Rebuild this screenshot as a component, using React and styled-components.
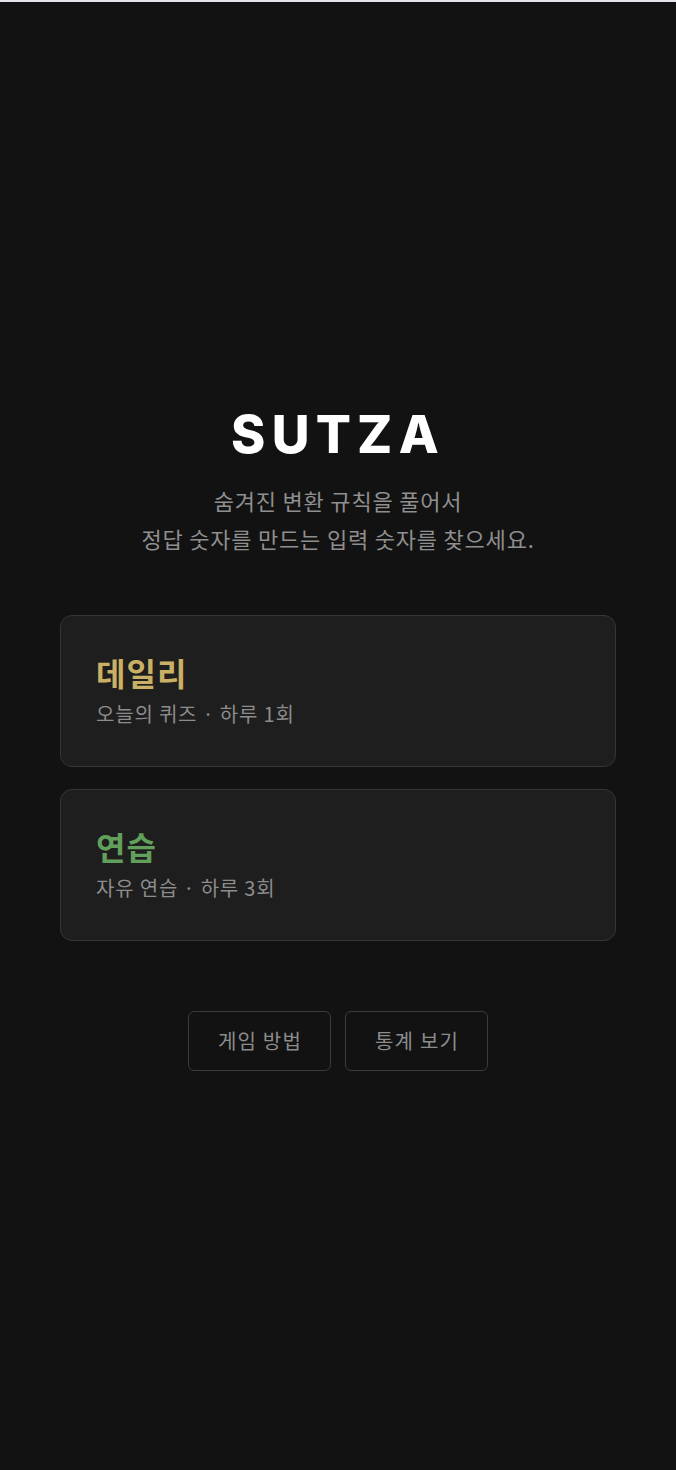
import React from 'react';
import styled, { createGlobalStyle } from 'styled-components';

const GlobalStyle = createGlobalStyle`
  html, body {
    margin: 0;
    padding: 0;
    background: #121212;
  }
  body {
    font-family: "Noto Sans CJK KR", "Noto Sans", sans-serif;
    -webkit-font-smoothing: antialiased;
  }
  * {
    box-sizing: border-box;
  }
`;

const TopStrip = styled.div`
  height: 2px;
  background: #e6e3ea;
`;

const Page = styled.main`
  min-height: calc(100vh - 2px);
  display: flex;
  flex-direction: column;
  align-items: center;
  justify-content: center;
  padding: 0 60px;
  color: #fff;
`;

const Title = styled.h1`
  margin: 2px 0 0;
  font-family: Inter, "Liberation Sans", sans-serif;
  font-size: 52px;
  font-weight: 800;
  line-height: 62px;
  letter-spacing: 0.12em;
  color: #fff;
`;

const Lead = styled.p`
  margin: 15px 0 0;
  font-size: 22px;
  line-height: 38px;
  color: #8f8f8f;
  text-align: center;
  letter-spacing: 0.8px;
`;

const ModeList = styled.div`
  width: 100%;
  max-width: 556px;
  margin-top: 58px;
  display: flex;
  flex-direction: column;
  gap: 22px;
`;

const ModeCard = styled.button`
  display: block;
  width: 100%;
  text-align: left;
  padding: 36px 35px 38px;
  background: #1e1e1e;
  border: 1.5px solid #363636;
  border-radius: 12px;
  cursor: pointer;
  font-family: inherit;
`;

const ModeName = styled.div`
  font-size: 32px;
  line-height: 40px;
  font-weight: 700;
  letter-spacing: 1px;
  color: ${(props) => props.color};
`;

const ModeInfo = styled.div`
  margin-top: 8px;
  font-size: 20px;
  line-height: 28px;
  letter-spacing: 0.8px;
  color: #8c8c8c;
`;

const ButtonRow = styled.div`
  margin-top: 70px;
  display: flex;
  gap: 14px;
  justify-content: center;
`;

const GhostButton = styled.button`
  height: 60px;
  padding: 0 28px 0 29px;
  background: transparent;
  border: 1.5px solid #3a3a3a;
  border-radius: 6px;
  color: #8c8c8c;
  font-family: inherit;
  font-size: 20px;
  letter-spacing: 1.2px;
  cursor: pointer;
`;

const modes = [
  { name: '데일리', info: '오늘의 퀴즈 · 하루 1회', color: '#c9b064' },
  { name: '연습', info: '자유 연습 · 하루 3회', color: '#619f5b' },
];

export default function App() {
  return (
    <>
      <GlobalStyle />
      <TopStrip />
      <Page>
        <Title>SUTZA</Title>
        <Lead>
          숨겨진 변환 규칙을 풀어서
          <br />
          정답 숫자를 만드는 입력 숫자를 찾으세요.
        </Lead>
        <ModeList>
          {modes.map((m) => (
            <ModeCard key={m.name}>
              <ModeName color={m.color}>{m.name}</ModeName>
              <ModeInfo>{m.info}</ModeInfo>
            </ModeCard>
          ))}
        </ModeList>
        <ButtonRow>
          <GhostButton>게임 방법</GhostButton>
          <GhostButton>통계 보기</GhostButton>
        </ButtonRow>
      </Page>
    </>
  );
}
